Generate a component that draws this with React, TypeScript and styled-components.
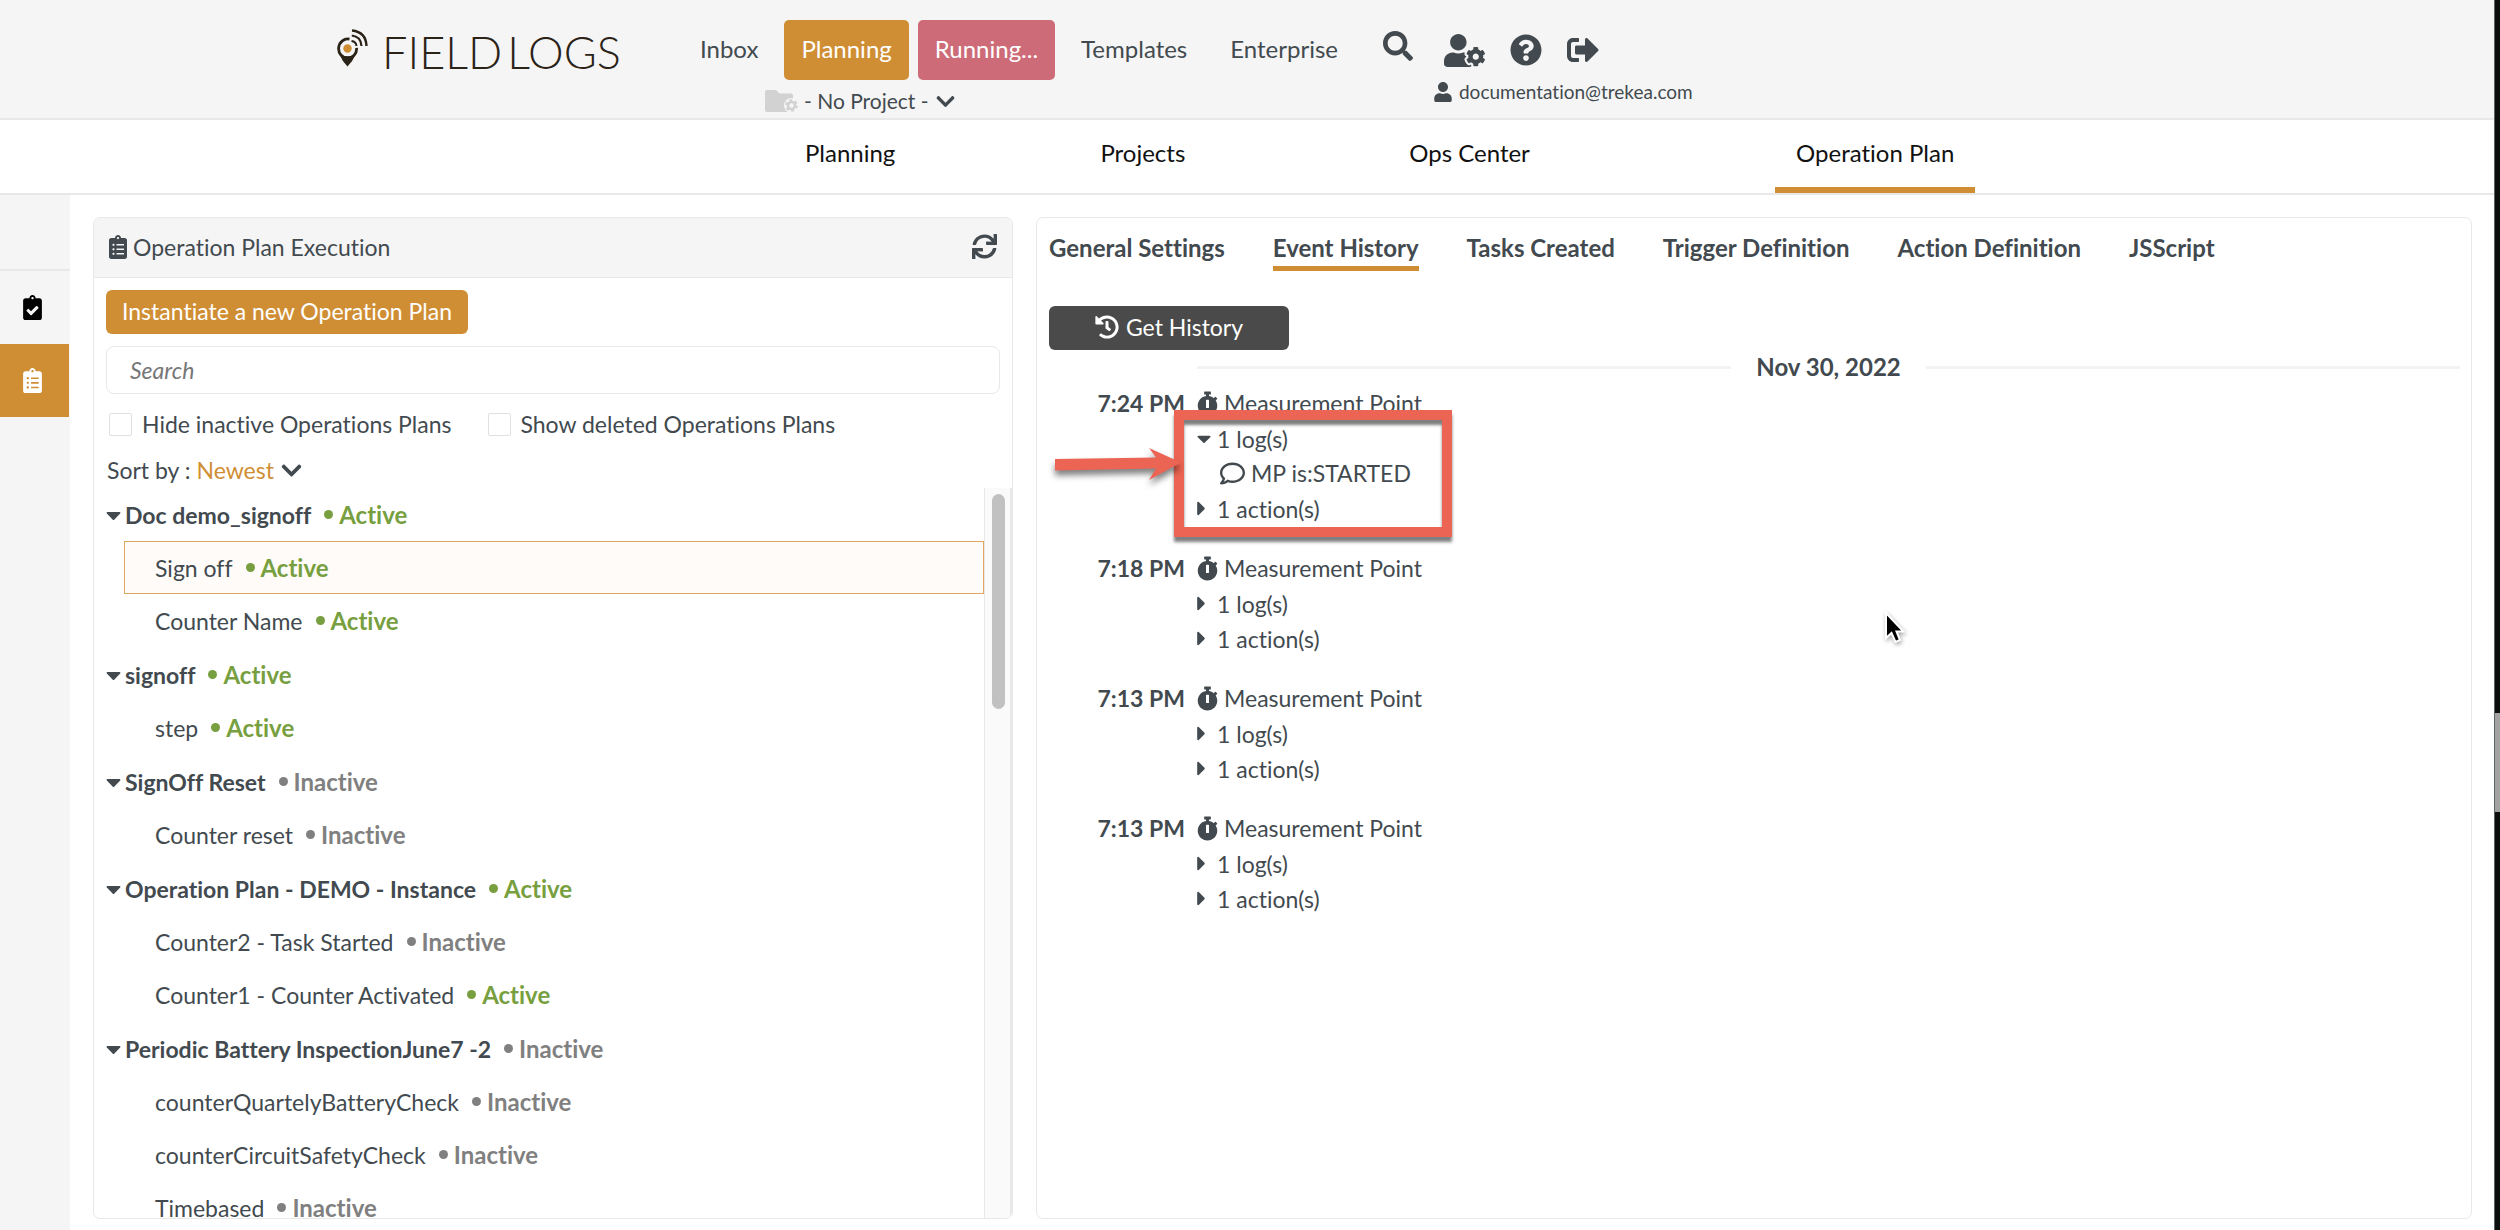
import React from "react";
import styled, { createGlobalStyle, css } from "styled-components";
import {
  FaCaretDown,
  FaCaretRight,
  FaChevronDown,
  FaClipboardCheck,
  FaClipboardList,
  FaHistory,
  FaQuestionCircle,
  FaRegComment,
  FaSearch,
  FaSignOutAlt,
  FaStopwatch,
  FaSync,
  FaUser,
  FaUserCog,
} from "react-icons/fa";

const color = {
  ink: "#424a4f",
  orange: "#d08e34",
  rose: "#cd6c78",
  green: "#779f40",
  grey: "#808080",
  shell: "#f5f5f5",
  line: "#e8e8e8",
  red: "#ec6453",
};

const Global = createGlobalStyle`
  *, *::before, *::after { box-sizing: border-box; }
  body { margin: 0; background: #fff; }
  body, button, input, select {
    font-family: Lato, "Liberation Sans", sans-serif;
    font-size: 23px;
    line-height: 28px;
    font-variant-ligatures: none;
    color: ${color.ink};
  }
  button { border: 0; padding: 0; background: none; cursor: pointer; text-align: left; }
  a { color: inherit; text-decoration: none; }
  ul { list-style: none; margin: 0; padding: 0; }
  svg { display: block; flex: none; }
`;

const Glyph = styled.span<{ $w: number; $h: number }>`
  display: flex;
  flex: none;
  svg {
    width: ${(p) => p.$w}px;
    height: ${(p) => p.$h}px;
  }
`;

const Screen = styled.div`
  display: flex;
  height: 100vh;
  position: relative;
`;

const Page = styled.div`
  flex: 1;
  min-width: 0;
  display: flex;
  flex-direction: column;
`;

const DesktopEdge = styled.div`
  width: 6px;
  flex: none;
  border-left: 1px solid #5d6468;
  background: linear-gradient(#0a0e0c 0 58%, #a3a3a3 58% 66%, #0a0e0c 66% 100%);
`;

/* Header */

const Header = styled.header`
  display: flex;
  height: 120px;
  flex: none;
  padding: 20px 0 0 337px;
  background: ${color.shell};
  border-bottom: 2px solid ${color.line};
`;

const Brand = styled.a`
  display: flex;
  align-items: flex-start;
  width: 346px;
  gap: 14px;
  padding-top: 9px;
`;

const BrandName = styled.span`
  display: flex;
  gap: 5px;
  font-weight: 300;
  font-size: 45px;
  line-height: 46px;
  color: #2b2218;
`;

const NavColumn = styled.div`
  display: flex;
  flex-direction: column;
`;

const MainNav = styled.nav`
  display: flex;
  gap: 9px;
`;

const NavLink = styled.a<{ $fill?: string }>`
  display: flex;
  align-items: center;
  height: 60px;
  padding: 0 17px 3px;
  border-radius: 5px;
  font-size: 24px;
  background: ${(p) => p.$fill ?? "transparent"};
  color: ${(p) => (p.$fill ? "#fff" : color.ink)};
`;

const ProjectPicker = styled.label`
  display: flex;
  align-items: center;
  gap: 6px;
  height: 32px;
  margin: 5px 0 0 82px;
`;

const PlainSelect = styled.select<{ $accent?: boolean }>`
  appearance: none;
  border: 0;
  padding: 0;
  background: none;
  font-size: ${(p) => (p.$accent ? 23 : 21)}px;
  color: ${(p) => (p.$accent ? color.orange : color.ink)};
`;

const AccountColumn = styled.div`
  display: flex;
  flex-direction: column;
  margin-left: 28px;
`;

const AccountIcons = styled.div`
  display: flex;
  align-items: center;
  gap: 25px;
  height: 60px;
`;

const SearchButton = styled.button`
  align-self: flex-start;
  padding: 11px 6px 0 0;
`;

const Account = styled.div`
  display: flex;
  align-items: center;
  gap: 7px;
  margin-left: 51px;
  font-size: 19px;
  line-height: 24px;
`;

/* Section navigation */

const SectionNav = styled.nav`
  display: grid;
  grid-template-columns: 294fr 292fr 362fr 450fr;
  justify-items: center;
  flex: none;
  height: 75px;
  padding: 0 15.8% 0 28.2%;
  border-bottom: 2px solid ${color.line};
  font-size: 24px;
  color: #111;
`;

const SectionLink = styled.a<{ $active?: boolean }>`
  padding: 19px 21px 0;
  border-bottom: 6px solid ${(p) => (p.$active ? color.orange : "transparent")};
`;

/* Body */

const Body = styled.div`
  display: flex;
  flex: 1;
  min-height: 0;
`;

const Rail = styled.aside`
  display: flex;
  flex-direction: column;
  flex: none;
  width: 70px;
  padding-top: 74px;
  background: ${color.shell};
`;

const RailButton = styled.button<{ $active?: boolean }>`
  display: flex;
  align-items: center;
  height: ${(p) => (p.$active ? 73 : 75)}px;
  width: ${(p) => (p.$active ? 69 : 70)}px;
  padding-left: 23px;
  color: ${(p) => (p.$active ? "#fff" : "#000")};
  background: ${(p) => (p.$active ? color.orange : "transparent")};
  border-top: ${(p) => (p.$active ? "0" : `2px solid ${color.line}`)};
`;

const Workspace = styled.main`
  flex: 1;
  min-width: 0;
  display: grid;
  grid-template-columns: 920fr 1436fr;
  gap: 23px;
  padding: 22px 22px 11px 23px;
`;

const panel = css`
  display: flex;
  flex-direction: column;
  min-width: 0;
  min-height: 0;
  border: 1px solid ${color.line};
  border-radius: 7px;
`;

const PlanPanel = styled.section`
  ${panel}
  overflow: hidden;
`;

const PlanHeader = styled.h2`
  display: flex;
  align-items: center;
  justify-content: space-between;
  height: 60px;
  flex: none;
  margin: 0;
  padding: 0 15px 2px;
  font-size: 23px;
  font-weight: 400;
  background: ${color.shell};
  border-bottom: 1px solid ${color.line};
`;

const PlanTitle = styled.span`
  display: flex;
  align-items: center;
  gap: 6px;
`;

const PlanTools = styled.div`
  display: flex;
  flex-direction: column;
  align-items: flex-start;
  padding: 12px 12px 0;
`;

const OrangeButton = styled.button`
  height: 44px;
  padding: 0 16px 2px;
  border-radius: 6px;
  background: ${color.orange};
  color: #fff;
`;

const SearchBox = styled.input`
  width: 100%;
  height: 48px;
  margin-top: 12px;
  padding: 0 23px;
  border: 1px solid ${color.line};
  border-radius: 8px;
  outline: 0;
  background: #fff;
  &::placeholder {
    color: #777;
    font-style: italic;
    opacity: 1;
  }
`;

const Filters = styled.div`
  display: flex;
  gap: 36px;
  padding: 16px 0 0 3px;
`;

const Filter = styled.label`
  display: flex;
  align-items: center;
  gap: 10px;
`;

const CheckBox = styled.input`
  appearance: none;
  width: 23px;
  height: 23px;
  margin: 0;
  border: 1px solid #e0e0e0;
  border-radius: 2px;
  background: #fff;
`;

const SortBy = styled.label`
  display: flex;
  align-items: center;
  gap: 6px;
  margin: 18px 0 4px 1px;
`;

const TreeArea = styled.div`
  display: flex;
  flex: 1;
  min-height: 0;
`;

const Tree = styled.ul`
  flex: 1;
  overflow: hidden;
`;

const TreeGroup = styled.li`
  margin-bottom: 1px;
`;

const Branch = styled.button`
  display: flex;
  align-items: center;
  height: 53px;
  padding-left: 12px;
  gap: 4px;
  font-weight: 700;
`;

const Leaf = styled.button<{ $selected?: boolean }>`
  display: flex;
  align-items: center;
  width: calc(100% - 30px);
  height: 53px;
  margin-left: 30px;
  padding-left: 30px;
  border: 1px solid ${(p) => (p.$selected ? "#dfa760" : "transparent")};
  background: ${(p) => (p.$selected ? "#fefbf8" : "transparent")};
`;

const Status = styled.span<{ $on: boolean }>`
  display: flex;
  align-items: center;
  gap: 6px;
  margin-left: 13px;
  font-size: 24px;
  font-weight: 700;
  color: ${(p) => (p.$on ? color.green : color.grey)};
  &::before {
    content: "";
    width: 9px;
    height: 9px;
    border-radius: 50%;
    background: currentColor;
  }
`;

const BranchName = styled.span`
  display: flex;
  align-items: center;
`;

const Track = styled.div`
  width: 28px;
  flex: none;
  padding: 6px 5px 0 7px;
  border-left: 1px solid ${color.line};
  border-right: 2px solid ${color.line};
  background: #fafafa;
`;

const Thumb = styled.div`
  height: 215px;
  border-radius: 8px;
  background: #c1c1c1;
`;

/* Event history */

const HistoryPanel = styled.section`
  ${panel}
  align-items: flex-start;
  padding: 16px 11px 0 12px;
`;

const Tabs = styled.div`
  display: flex;
  gap: 48px;
`;

const Tab = styled.button<{ $active?: boolean }>`
  height: 37px;
  padding-bottom: 5px;
  font-size: 24px;
  font-weight: 700;
  border-bottom: 5px solid ${(p) => (p.$active ? color.orange : "transparent")};
`;

const DarkButton = styled.button`
  display: flex;
  align-items: center;
  justify-content: center;
  gap: 7px;
  width: 240px;
  height: 44px;
  margin-top: 35px;
  padding-bottom: 2px;
  border-radius: 6px;
  background: #4a4a4a;
  color: #fff;
`;

const DateDivider = styled.div`
  display: flex;
  align-items: center;
  align-self: stretch;
  gap: 25px;
  margin: 3px 0 5px 148px;
  font-size: 24px;
  font-weight: 700;
  &::before,
  &::after {
    content: "";
    flex: 1;
    height: 3px;
    background: #f3f3f3;
  }
`;

const Event = styled.article`
  display: grid;
  grid-template-columns: 136px auto;
  column-gap: 12px;
  margin-bottom: 25px;
  line-height: 35px;
`;

const Time = styled.time`
  font-weight: 700;
  text-align: right;
`;

const EventBody = styled.div`
  position: relative;
`;

const EventLine = styled.div<{ $inset?: boolean }>`
  display: flex;
  align-items: center;
  gap: 6px;
  height: 35px;
  padding-left: ${(p) => (p.$inset ? 23 : 0)}px;
`;

const Fold = styled.button`
  display: flex;
  align-items: center;
  gap: 6px;
  height: 35px;
`;

const FoldMark = styled.span`
  display: flex;
  width: 14px;
`;

const Highlight = styled.div`
  position: absolute;
  top: 24px;
  left: -23px;
  width: 278px;
  height: 127px;
  border: 10px solid ${color.red};
  box-shadow: 0 5px 3px rgba(0, 0, 0, 0.5), inset 0 5px 3px rgba(0, 0, 0, 0.5);
`;

const Pointer = styled.svg`
  position: absolute;
  top: 61px;
  left: -146px;
  overflow: visible;
  filter: drop-shadow(0 5px 3px rgba(0, 0, 0, 0.5));
`;

const MouseCursor = styled.svg`
  position: absolute;
  left: 1884px;
  top: 611px;
  filter: drop-shadow(1px 2px 2px rgba(0, 0, 0, 0.35));
`;

const LogoMark = () => (
  <svg width="31" height="38" viewBox="0 0 31 38" fill="none" aria-hidden="true">
    <path d="M12.500 10.200A9 9.600 0 1 0 19.600 18.800" stroke="#2b2218" strokeWidth="2.800" />
    <path d="M2 24.500Q10.500 30 19 24.500Q16 32 10.500 37.500Q5 32 2 24.500Z" fill="#2b2218" />
    <circle cx="10.500" cy="19.500" r="4.200" fill={color.orange} />
    <path d="M14.500 12Q19 12.500 19.500 17" stroke="#2b2218" strokeWidth="2" />
    <path d="M14.800 6.500Q24 7.500 24.500 17" stroke="#2b2218" strokeWidth="2.200" />
    <path d="M15 1.500Q29 3 29.500 17" stroke="#2b2218" strokeWidth="2.400" />
  </svg>
);

const FolderCog = () => (
  <svg width="33" height="24" viewBox="0 0 33 24" aria-hidden="true">
    <path d="M2 1h9l3.500 3.500H26a2 2 0 0 1 2 2V21a2 2 0 0 1-2 2H2a2 2 0 0 1-2-2V3a2 2 0 0 1 2-2z" fill="#d2d2d2" />
    <circle cx="26.500" cy="16.500" r="7.500" fill={color.shell} />
    <circle cx="26.500" cy="16.500" r="3.500" fill="none" stroke="#d2d2d2" strokeWidth="2.600" />
    <circle cx="26.500" cy="16.500" r="5.200" fill="none" stroke="#d2d2d2" strokeWidth="2.200" strokeDasharray="2.800 2.645" />
  </svg>
);

const plans = [
  { name: "Doc demo_signoff", on: true, items: [["Sign off", true], ["Counter Name", true]] },
  { name: "signoff", on: true, items: [["step", true]] },
  { name: "SignOff Reset", on: false, items: [["Counter reset", false]] },
  {
    name: "Operation Plan - DEMO - Instance",
    on: true,
    items: [["Counter2 - Task Started", false], ["Counter1 - Counter Activated", true]],
  },
  {
    name: "Periodic Battery InspectionJune7 -2",
    on: false,
    items: [["counterQuartelyBatteryCheck", false], ["counterCircuitSafetyCheck", false], ["Timebased", false]],
  },
] as { name: string; on: boolean; items: [string, boolean][] }[];

const tabs = ["General Settings", "Event History", "Tasks Created", "Trigger Definition", "Action Definition", "JSScript"];

const events = [
  { time: "7:24 PM", open: true },
  { time: "7:18 PM", open: false },
  { time: "7:13 PM", open: false },
  { time: "7:13 PM", open: false },
];

const StatusTag = ({ on }: { on: boolean }) => <Status $on={on}>{on ? "Active" : "Inactive"}</Status>;

const Folded = ({ open, children }: { open?: boolean; children: React.ReactNode }) => (
  <Fold aria-expanded={!!open}>
    <FoldMark>
      {open ? (
        <Glyph $w={14} $h={23}><FaCaretDown /></Glyph>
      ) : (
        <Glyph $w={9} $h={23}><FaCaretRight /></Glyph>
      )}
    </FoldMark>
    {children}
  </Fold>
);

export default function App() {
  return (
    <Screen>
      <Global />
      <Page>
        <Header>
          <Brand href="#" aria-label="Field Logs">
            <LogoMark />
            <BrandName>
              <span>FIELD</span>
              <span>LOGS</span>
            </BrandName>
          </Brand>
          <NavColumn>
            <MainNav>
              <NavLink href="#">Inbox</NavLink>
              <NavLink href="#" $fill={color.orange}>Planning</NavLink>
              <NavLink href="#" $fill={color.rose}>Running...</NavLink>
              <NavLink href="#">Templates</NavLink>
              <NavLink href="#">Enterprise</NavLink>
            </MainNav>
            <ProjectPicker>
              <FolderCog />
              <PlainSelect aria-label="Project">
                <option>- No Project -</option>
              </PlainSelect>
              <Glyph $w={21} $h={21}><FaChevronDown /></Glyph>
            </ProjectPicker>
          </NavColumn>
          <AccountColumn>
            <AccountIcons>
              <SearchButton aria-label="Search"><Glyph $w={30} $h={30}><FaSearch /></Glyph></SearchButton>
              <button aria-label="User settings"><Glyph $w={41} $h={33}><FaUserCog /></Glyph></button>
              <button aria-label="Help"><Glyph $w={32} $h={32}><FaQuestionCircle /></Glyph></button>
              <button aria-label="Sign out"><Glyph $w={32} $h={32}><FaSignOutAlt /></Glyph></button>
            </AccountIcons>
            <Account>
              <Glyph $w={18} $h={20}><FaUser /></Glyph>
              documentation@trekea.com
            </Account>
          </AccountColumn>
        </Header>
        <SectionNav>
          <SectionLink href="#">Planning</SectionLink>
          <SectionLink href="#">Projects</SectionLink>
          <SectionLink href="#">Ops Center</SectionLink>
          <SectionLink href="#" $active>Operation Plan</SectionLink>
        </SectionNav>
        <Body>
          <Rail>
            <RailButton aria-label="Tasks"><Glyph $w={19} $h={25}><FaClipboardCheck /></Glyph></RailButton>
            <RailButton aria-label="Operation plans" $active><Glyph $w={19} $h={25}><FaClipboardList /></Glyph></RailButton>
          </Rail>
          <Workspace>
            <PlanPanel>
              <PlanHeader>
                <PlanTitle>
                  <Glyph $w={18} $h={24}><FaClipboardList /></Glyph>
                  Operation Plan Execution
                </PlanTitle>
                <button aria-label="Refresh"><Glyph $w={25} $h={25}><FaSync /></Glyph></button>
              </PlanHeader>
              <PlanTools>
                <OrangeButton>Instantiate a new Operation Plan</OrangeButton>
                <SearchBox type="text" placeholder="Search" aria-label="Search operation plans" />
                <Filters>
                  <Filter><CheckBox type="checkbox" />Hide inactive Operations Plans</Filter>
                  <Filter><CheckBox type="checkbox" />Show deleted Operations Plans</Filter>
                </Filters>
                <SortBy>
                  Sort by :
                  <PlainSelect $accent>
                    <option>Newest</option>
                  </PlainSelect>
                  <Glyph $w={23} $h={23}><FaChevronDown /></Glyph>
                </SortBy>
              </PlanTools>
              <TreeArea>
                <Tree>
                  {plans.map((plan, p) => (
                    <TreeGroup key={plan.name}>
                      <Branch aria-expanded>
                        <Glyph $w={15} $h={24}><FaCaretDown /></Glyph>
                        <BranchName>{plan.name}<StatusTag on={plan.on} /></BranchName>
                      </Branch>
                      <ul>
                        {plan.items.map(([name, on], i) => (
                          <li key={name}>
                            <Leaf $selected={p === 0 && i === 0}>{name}<StatusTag on={on} /></Leaf>
                          </li>
                        ))}
                      </ul>
                    </TreeGroup>
                  ))}
                </Tree>
                <Track><Thumb /></Track>
              </TreeArea>
            </PlanPanel>
            <HistoryPanel>
              <Tabs role="tablist">
                {tabs.map((name) => (
                  <Tab key={name} role="tab" $active={name === "Event History"}>{name}</Tab>
                ))}
              </Tabs>
              <DarkButton>
                <Glyph $w={24} $h={24}><FaHistory /></Glyph>
                Get History
              </DarkButton>
              <DateDivider>Nov 30, 2022</DateDivider>
              {events.map((event, i) => (
                <Event key={i}>
                  <Time>{event.time}</Time>
                  <EventBody>
                    <EventLine>
                      <Glyph $w={21} $h={25}><FaStopwatch /></Glyph>
                      Measurement Point
                    </EventLine>
                    <Folded open={event.open}>1 log(s)</Folded>
                    {event.open && (
                      <EventLine $inset>
                        <Glyph $w={25} $h={25}><FaRegComment /></Glyph>
                        MP is:STARTED
                      </EventLine>
                    )}
                    <Folded>1 action(s)</Folded>
                    {event.open && (
                      <>
                        <Highlight />
                        <Pointer width="130" height="34" viewBox="0 0 130 34" aria-hidden="true">
                          <path d="M4 12L105 10.500L98 1L130 15.500L98 33L105 21.500L4 23.500Z" fill={color.red} />
                        </Pointer>
                      </>
                    )}
                  </EventBody>
                </Event>
              ))}
            </HistoryPanel>
          </Workspace>
        </Body>
      </Page>
      <DesktopEdge />
      <MouseCursor width="22" height="34" viewBox="0 0 22 34" aria-hidden="true">
        <path d="M2 2V27L7.500 22L11.500 31L16 29L12.500 20.500H19.500Z" fill="#000" stroke="#fff" strokeWidth="2" />
      </MouseCursor>
    </Screen>
  );
}
